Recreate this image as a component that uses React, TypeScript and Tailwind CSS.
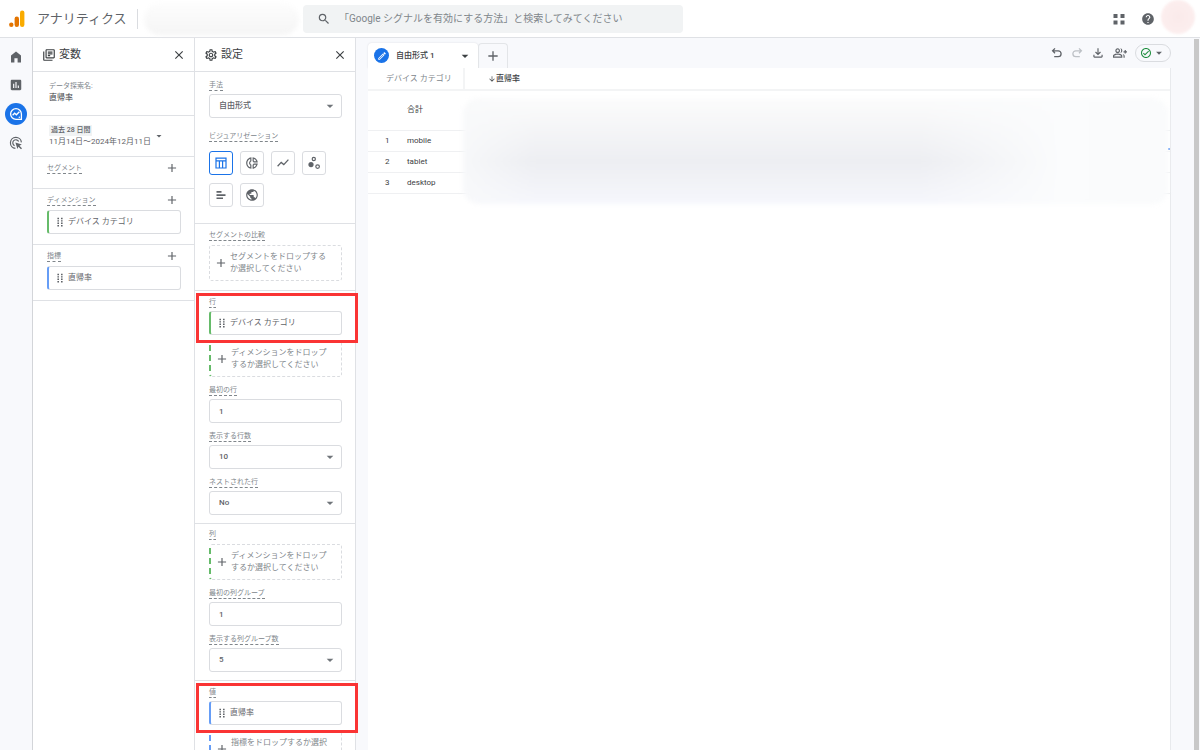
import React from 'react';
import {
  MdAdd,
  MdArrowDownward,
  MdArrowDropDown,
  MdAssessment,
  MdClose,
  MdHelp,
  MdOutlineCheckCircle,
  MdOutlineDonutSmall,
  MdOutlineEdit,
  MdOutlineFileDownload,
  MdOutlineGroupAdd,
  MdOutlineLibraryBooks,
  MdOutlineSettings,
  MdPublic,
  MdSearch,
} from 'react-icons/md';

type Tone = 'green' | 'blue' | 'none';

const rows = ['mobile', 'tablet', 'desktop'];

/* ---------- アイコン ---------- */

function AnalyticsLogo() {
  return (
    <svg className="h-[18px] w-4" viewBox="0 0 16 18">
      <rect x="11" y="0.5" width="4.4" height="16.5" rx="2.2" fill="#f9ab00" />
      <rect x="5.6" y="6.5" width="4.4" height="10.5" rx="2.2" fill="#e37400" />
      <circle cx="2.3" cy="14.8" r="2.2" fill="#e37400" />
    </svg>
  );
}

function HomeIcon() {
  return (
    <svg className="size-3.5" viewBox="0 0 14 14" fill="currentColor">
      <path d="M2 5.4 7 1.6l5 3.8v7.1H8.6V8.2H5.4v4.3H2z" />
    </svg>
  );
}

function ExploreIcon() {
  return (
    <svg className="size-3.5" viewBox="0 0 14 14" fill="none" stroke="currentColor" strokeWidth="1.3">
      <path d="M7 1.6a5.4 5.4 0 1 0 0 10.8h5.4V7A5.4 5.4 0 0 0 7 1.6z" />
      <path d="m3.6 8.2 2-2 1.8 1.6 3-3" />
      <circle cx="10.3" cy="10.3" r=".7" fill="currentColor" stroke="none" />
    </svg>
  );
}

function TargetClickIcon() {
  return (
    <svg className="size-3.5" viewBox="0 0 14 14" fill="none" stroke="currentColor" strokeWidth="1.2">
      <path d="M6.4 12.4a5.5 5.5 0 1 1 6-6" />
      <path d="M5.6 9.7a3.1 3.1 0 1 1 4.1-4.1" />
      <path d="m6.4 6.4 6.4 2.2-2.4 1.1 2.6 2.6-1 1-2.6-2.6-1 2.3z" fill="currentColor" stroke="none" />
    </svg>
  );
}

function AppsIcon() {
  return (
    <svg className="size-3" viewBox="0 0 12 12" fill="currentColor">
      <path d="M.5 1h4v4h-4zM7.5 1h4v4h-4zM.5 7.5h4v4h-4zM7.5 7.5h4v4h-4z" />
    </svg>
  );
}

function UndoIcon() {
  return (
    <svg className="size-3" viewBox="0 0 12 12" fill="none" stroke="currentColor" strokeWidth="1.3">
      <path d="M4 1.4 1.6 3.8 4 6.2M1.8 3.8h5.4a2.9 2.9 0 0 1 0 5.8H3.2" />
    </svg>
  );
}

function RedoIcon() {
  return (
    <svg className="size-3" viewBox="0 0 12 12" fill="none" stroke="currentColor" strokeWidth="1.3">
      <path d="m8 1.4 2.4 2.4L8 6.2M10.2 3.8H4.8a2.9 2.9 0 0 0 0 5.8h4" />
    </svg>
  );
}

function TableIcon() {
  return (
    <svg className="size-3" viewBox="0 0 12 12" fill="none" stroke="currentColor" strokeWidth="1.2">
      <path d="M1 1.2h10v9.8H1zM1 3.9h10M4.4 3.9V11M7.6 3.9V11" />
    </svg>
  );
}

function LineIcon() {
  return (
    <svg className="size-3.5" viewBox="0 0 14 14" fill="none" stroke="currentColor" strokeWidth="1.3">
      <path d="m1.6 10.2 3.6-3.8 2.6 2.2 4.6-5" />
    </svg>
  );
}

function ScatterIcon() {
  return (
    <svg className="size-3.5" viewBox="0 0 14 14" fill="none" stroke="currentColor" strokeWidth="1.2">
      <circle cx="6.8" cy="3" r="1.6" />
      <circle cx="10.6" cy="10.6" r="1.8" />
      <circle cx="4" cy="8.6" r="2.6" fill="currentColor" stroke="none" />
    </svg>
  );
}

function BarsIcon() {
  return (
    <svg className="size-3.5" viewBox="0 0 14 14" fill="currentColor">
      <path d="M2.5 3h5v1.7h-5zM2.5 6.2h9v1.7h-9zM2.5 9.4H9v1.7H2.5z" />
    </svg>
  );
}

function DragIcon() {
  return (
    <svg className="h-2.5 w-1.5 shrink-0 text-[#5f6368]" viewBox="0 0 6 10" fill="currentColor">
      <path d="M.4.8H2v1.4H.4zM4 .8h1.6v1.4H4zM.4 3.2H2v1.4H.4zM4 3.2h1.6v1.4H4zM.4 5.6H2V7H.4zM4 5.6h1.6V7H4zM.4 8H2v1.4H.4zM4 8h1.6v1.4H4z" />
    </svg>
  );
}

/* ---------- 共通パーツ ---------- */

function PanelHeader({ icon, title }: { icon: React.ReactNode; title: string }) {
  return (
    <div className="flex h-[34px] items-center border-b border-[#dfe1e5] pl-[9px] pr-2">
      {icon}
      <h2 className="ml-[3px] flex-1 text-[11px] leading-4 text-[#3c4043]">{title}</h2>
      <button aria-label="閉じる" className="text-[#3c4043]">
        <MdClose className="size-3.5" />
      </button>
    </div>
  );
}

const labelClass =
  'h-3 w-fit border-b border-dashed border-[#80868b] text-[7px] leading-[13px] text-[#80868b]';

function VariableGroup({ title, children }: { title: string; children?: React.ReactNode }) {
  return (
    <section className="border-b border-[#dfe1e5] pb-2.5 pl-3.5 pr-[13px] pt-[5px]">
      <div className="flex h-3 items-center justify-between pr-0.5">
        <h3 className={labelClass}>{title}</h3>
        <button aria-label={`${title}を追加`} className="text-[#5f6368]">
          <MdAdd className="size-3.5" />
        </button>
      </div>
      <div className="mt-1">{children}</div>
    </section>
  );
}

function Chip({ tone, children }: { tone: Tone; children: React.ReactNode }) {
  return (
    <div
      className={`flex h-6 items-center gap-[5px] rounded-[3px] border border-l-2 border-[#dadce0] pl-2 text-[8px] leading-3 text-[#5f6368] ${
        tone === 'green' ? 'border-l-[#66bb6a]' : 'border-l-[#669df6]'
      }`}
    >
      <DragIcon />
      <span>{children}</span>
    </div>
  );
}

function DropZone({ tone, children }: { tone: Tone; children: React.ReactNode }) {
  return (
    <button
      className={`flex h-9 w-full items-center gap-0.5 rounded-[3px] border border-dashed border-[#dadce0] pl-1 text-left text-[8px] leading-3 text-[#80868b] ${
        tone === 'none'
          ? ''
          : tone === 'green'
            ? 'border-l-2 border-l-[#66bb6a]'
            : 'border-l-2 border-l-[#669df6]'
      }`}
    >
      <MdAdd className="size-3.5 shrink-0 text-[#5f6368]" />
      <span className="pb-px">{children}</span>
    </button>
  );
}

interface FieldProps {
  id: string;
  label: string;
  value: string;
}

const controlClass =
  'block h-6 w-full appearance-none rounded-[3px] border border-[#dadce0] bg-white px-[9px] text-[8px] leading-3 font-medium text-[#5f6368]';

function SelectField({ id, label, value }: FieldProps) {
  return (
    <div>
      <label htmlFor={id} className={`block ${labelClass}`}>
        {label}
      </label>
      <div className="relative mt-[3px]">
        <select id={id} defaultValue={value} className={controlClass}>
          <option>{value}</option>
        </select>
        <MdArrowDropDown className="pointer-events-none absolute right-1 top-1 size-4 text-[#70757a]" />
      </div>
    </div>
  );
}

function TextField({ id, label, value }: FieldProps) {
  return (
    <div>
      <label htmlFor={id} className={`block ${labelClass}`}>
        {label}
      </label>
      <input id={id} defaultValue={value} className={`mt-[3px] ${controlClass}`} />
    </div>
  );
}

function VizButton({ label, active, children }: { label: string; active?: boolean; children: React.ReactNode }) {
  return (
    <button
      aria-label={label}
      className={`flex size-6 items-center justify-center rounded-[3px] border ${
        active ? 'border-[#1a73e8] text-[#1a73e8]' : 'border-[#dadce0] text-[#5f6368]'
      }`}
    >
      {children}
    </button>
  );
}

// 注目箇所を囲む赤枠
function Highlight() {
  return (
    <div className="pointer-events-none absolute -right-[3px] left-px top-0.5 h-[50px] border-3 border-[#fa3434]" />
  );
}

/* ---------- 画面の各領域 ---------- */

function TopBar() {
  return (
    <header className="flex h-[38px] shrink-0 items-center border-b border-[#dfe1e5] bg-white">
      <div className="flex w-[137px] items-center pl-[9px]">
        <AnalyticsLogo />
        <h1 className="ml-3 text-[13px] leading-5 text-[#5f6368]">アナリティクス</h1>
      </div>
      <div className="h-5 w-px bg-[#dadce0]" />
      <div className="ml-1.5 mr-1 h-8 w-[155px] rounded-2xl bg-linear-to-b from-[#fdfdfd] to-[#f5f5f5] blur-[2px]" />
      <div className="flex h-7 w-[380px] items-center rounded bg-[#f1f3f4] pl-3.5">
        <MdSearch className="size-3.5 text-[#5f6368]" />
        <input
          aria-label="検索"
          placeholder="「Google シグナルを有効にする方法」と検索してみてください"
          className="ml-2 flex-1 bg-transparent text-[10px] leading-4 placeholder:text-[#80868b]"
        />
      </div>
      <div className="ml-auto flex items-center text-[#5f6368]">
        <button aria-label="アプリ">
          <AppsIcon />
        </button>
        <button aria-label="ヘルプ" className="ml-4">
          <MdHelp className="size-3.5" />
        </button>
        <div className="mb-1 ml-1.5 mr-[5px] size-[34px] rounded-full bg-radial from-[#faeaea] to-[#fdf0f0] blur-[1px]" />
      </div>
    </header>
  );
}

function NavRail() {
  return (
    <nav className="flex w-[33px] shrink-0 flex-col items-center border-r border-[#d3d5d9] bg-[#f8f9fc] pt-[9px] text-[#5f6368]">
      <a href="#home" aria-label="ホーム" className="flex h-5 items-center">
        <HomeIcon />
      </a>
      <a href="#reports" aria-label="レポート" className="mt-2 flex h-5 items-center">
        <MdAssessment className="size-3.5" />
      </a>
      <a
        href="#explore"
        aria-label="探索"
        className="mt-2 flex size-[22px] items-center justify-center rounded-full bg-[#1a73e8] text-white"
      >
        <ExploreIcon />
      </a>
      <a href="#ads" aria-label="広告" className="mt-2 flex h-5 items-center">
        <TargetClickIcon />
      </a>
    </nav>
  );
}

function VariablesPanel() {
  return (
    <aside className="w-[162px] shrink-0 border-r border-[#dfe1e5] bg-white">
      <PanelHeader icon={<MdOutlineLibraryBooks className="size-3.5 text-[#3c4043]" />} title="変数" />
      <div className="border-b border-[#dfe1e5] pb-3 pl-4 pt-[9px]">
        <label htmlFor="name" className="block text-[7px] leading-[11px] text-[#80868b]">
          データ探索名:
        </label>
        <input id="name" defaultValue="直帰率" className="block h-[11px] w-full text-[8px] leading-[11px] text-[#3c4043]" />
      </div>
      <button className="flex w-full items-center border-b border-[#dfe1e5] pb-[9px] pl-4 pt-[9px] text-left text-[#5f6368]">
        <span>
          <span className="block w-fit bg-[#f1f3f4] px-0.5 text-[7px] leading-[11px] font-medium">過去 28 日間</span>
          <span className="block text-[8px] leading-[11px]">11月14日〜2024年12月11日</span>
        </span>
        <MdArrowDropDown className="ml-0.5 size-3" />
      </button>
      <VariableGroup title="セグメント" />
      <VariableGroup title="ディメンション">
        <Chip tone="green">デバイス カテゴリ</Chip>
      </VariableGroup>
      <VariableGroup title="指標">
        <Chip tone="blue">直帰率</Chip>
      </VariableGroup>
    </aside>
  );
}

function SettingsPanel() {
  const section = 'relative border-b border-[#dfe1e5] pl-3.5 pr-[13px]';
  return (
    <aside className="z-10 w-[161px] shrink-0 border-r border-[#dfe1e5] bg-white">
      <PanelHeader icon={<MdOutlineSettings className="size-3.5 text-[#3c4043]" />} title="設定" />

      <section className={`${section} pb-4 pt-[7px]`}>
        <SelectField id="technique" label="手法" value="自由形式" />
        <h3 className={`mt-3 ${labelClass}`}>ビジュアリゼーション</h3>
        <div className="mt-[9px] flex flex-wrap gap-x-[7px] gap-y-2">
          <VizButton label="表" active>
            <TableIcon />
          </VizButton>
          <VizButton label="ドーナツ グラフ">
            <MdOutlineDonutSmall className="size-3.5" />
          </VizButton>
          <VizButton label="折れ線グラフ">
            <LineIcon />
          </VizButton>
          <VizButton label="散布図">
            <ScatterIcon />
          </VizButton>
          <VizButton label="棒グラフ">
            <BarsIcon />
          </VizButton>
          <VizButton label="地図">
            <MdPublic className="size-3.5" />
          </VizButton>
        </div>
      </section>

      <section className={`${section} pb-[9px] pt-[5px]`}>
        <h3 className={labelClass}>セグメントの比較</h3>
        <div className="mt-1">
          <DropZone tone="none">
            セグメントをドロップする
            <br />
            か選択してください
          </DropZone>
        </div>
      </section>

      <section className={`${section} pb-2 pt-[5px]`}>
        <Highlight />
        <h3 className={labelClass}>行</h3>
        <div className="mt-[3px] flex flex-col gap-1.5">
          <Chip tone="green">デバイス カテゴリ</Chip>
          <DropZone tone="green">
            ディメンションをドロップ
            <br />
            するか選択してください
          </DropZone>
        </div>
        <div className="mt-[7px] flex flex-col gap-[7px]">
          <TextField id="start-row" label="最初の行" value="1" />
          <SelectField id="row-count" label="表示する行数" value="10" />
          <SelectField id="nested" label="ネストされた行" value="No" />
        </div>
      </section>

      <section className={`${section} pb-2 pt-1`}>
        <h3 className={labelClass}>列</h3>
        <div className="mt-1">
          <DropZone tone="green">
            ディメンションをドロップ
            <br />
            するか選択してください
          </DropZone>
        </div>
        <div className="mt-[7px] flex flex-col gap-[7px]">
          <TextField id="start-col" label="最初の列グループ" value="1" />
          <SelectField id="col-count" label="表示する列グループ数" value="5" />
        </div>
      </section>

      <section className={`${section} pb-2 pt-[5px]`}>
        <Highlight />
        <h3 className={labelClass}>値</h3>
        <div className="mt-[3px] flex flex-col gap-1.5">
          <Chip tone="blue">直帰率</Chip>
          <DropZone tone="blue">
            指標をドロップするか選択
            <br />
            してください
          </DropZone>
        </div>
      </section>
    </aside>
  );
}

function ReportTable() {
  return (
    <table className="w-full border-collapse text-left text-[8px] leading-3 text-[#3c4043]">
      <thead>
        <tr className="h-[22px] border-b-2 border-[#f3f4f5]">
          <th colSpan={2} className="border-r-2 border-[#f3f4f5] pl-[18px] font-normal text-[#80868b]">
            デバイス カテゴリ
          </th>
          <th className="pl-[23px] font-medium">
            <span className="flex items-center">
              <MdArrowDownward className="size-2" />
              直帰率
            </span>
          </th>
        </tr>
      </thead>
      <tbody>
        <tr className="h-10 border-b border-[#eff0f2]">
          <td className="w-[39px]" />
          <td className="w-[57px]">合計</td>
          <td />
        </tr>
        {rows.map((name, i) => (
          <tr key={name} className="h-[21px] border-b border-[#eff0f2]">
            <td className="pl-[17px]">{i + 1}</td>
            <td>{name}</td>
            <td />
          </tr>
        ))}
      </tbody>
    </table>
  );
}

function Canvas() {
  return (
    <main className="flex min-w-0 flex-1 flex-col bg-[#f8f9fc] pl-3 pr-[29px] pt-[5px]">
      <div className="flex h-[25px] shrink-0">
        <div className="flex w-[110px] items-center rounded-t bg-white pl-1.5 pr-[5px] shadow-[0_0_2px_#dadce0]">
          <span className="flex size-[15px] items-center justify-center rounded-full bg-[#1a73e8] text-white">
            <MdOutlineEdit className="size-2.5" />
          </span>
          <button className="ml-[7px] flex flex-1 items-center justify-between text-[8px] leading-3 font-medium text-[#3c4043]">
            自由形式 1
            <MdArrowDropDown className="size-4" />
          </button>
        </div>
        <button
          aria-label="タブを追加"
          className="flex w-[30px] items-center justify-center rounded-t border border-b-0 border-[#e3e5e8] text-[#5f6368]"
        >
          <MdAdd className="size-4" />
        </button>
        <div className="ml-auto flex h-5 items-center gap-2 text-[#5f6368]">
          <button aria-label="元に戻す">
            <UndoIcon />
          </button>
          <button aria-label="やり直す" className="text-[#bdc1c6]">
            <RedoIcon />
          </button>
          <button aria-label="ダウンロード">
            <MdOutlineFileDownload className="size-3.5" />
          </button>
          <button aria-label="共有">
            <MdOutlineGroupAdd className="size-3.5" />
          </button>
          <button className="flex h-[18px] w-9 items-center justify-between rounded-full border border-[#dadce0] px-1" aria-label="データの状態">
            <MdOutlineCheckCircle className="size-3 text-[#1e8e3e]" />
            <MdArrowDropDown className="size-3.5" />
          </button>
        </div>
      </div>
      <div className="relative flex-1 border-r border-[#e8eaed] bg-white">
        <ReportTable />
        <div className="absolute right-0 top-20 size-0.5 bg-[#669df6]" />
        {/* 数値を伏せるぼかし */}
        <div className="absolute left-[95px] right-0.5 top-[30px] h-[106px] overflow-hidden rounded-2xl bg-linear-to-b from-[#fcfcfc] via-[#edeef2] via-60% to-[#f6f7fc] blur-[2px]">
          <div className="size-full bg-linear-to-r from-[#f9fafb]/80 via-transparent via-10% to-transparent">
            <div className="size-full bg-linear-to-r from-transparent from-65% via-[#fbfcfd] via-85% to-[#fafbfc]" />
          </div>
        </div>
      </div>
    </main>
  );
}

export default function App() {
  return (
    <div className="flex h-screen flex-col overflow-hidden bg-white font-['Roboto','Noto_Sans_CJK_JP',sans-serif]">
      <TopBar />
      <div className="flex min-h-0 flex-1 overflow-hidden">
        <NavRail />
        <VariablesPanel />
        <SettingsPanel />
        <Canvas />
        <div className="-ml-1.5 mr-px mt-px w-[5px] shrink-0 bg-[#c8c8c8]" />
      </div>
    </div>
  );
}
